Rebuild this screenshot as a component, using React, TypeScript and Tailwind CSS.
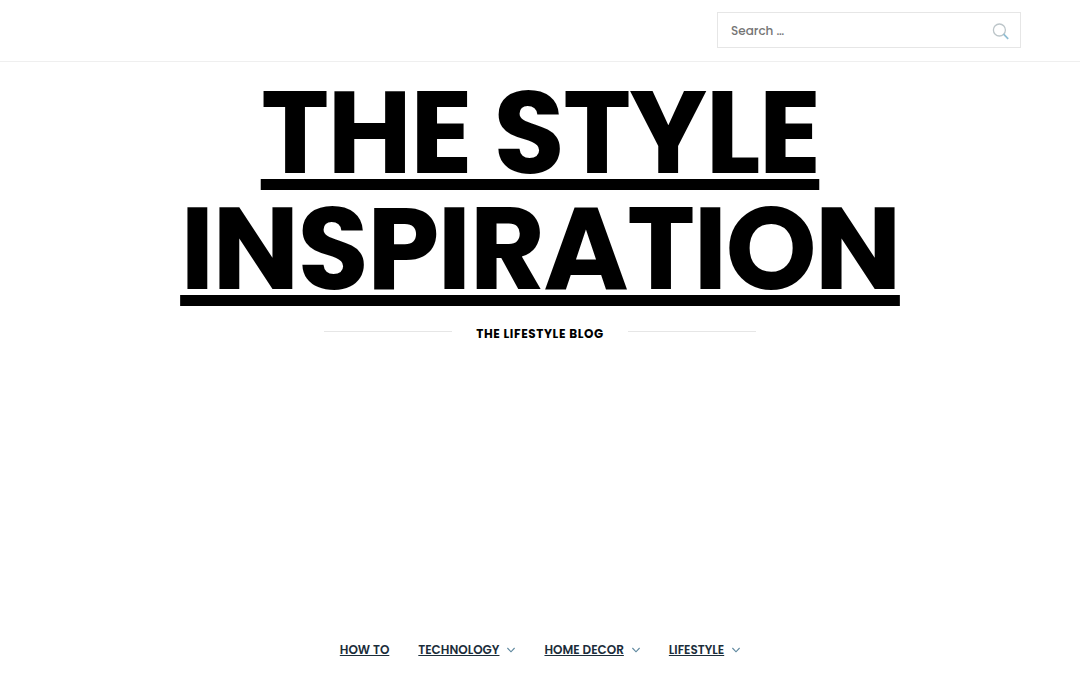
const menuItems = [
  { label: 'How To', hasChildren: false },
  { label: 'Technology', hasChildren: true },
  { label: 'Home Decor', hasChildren: true },
  { label: 'Lifestyle', hasChildren: true },
];

const SearchIcon = () => (
  <svg
    width="17"
    height="17"
    viewBox="0 0 17 17"
    fill="none"
    stroke="#bcc5c9"
    strokeWidth="1.3"
    aria-hidden="true"
  >
    <circle cx="7.4" cy="7" r="6" />
    <path d="M11.6 11.2 16.2 15.8" stroke="#8fbdd3" strokeWidth="1.7" />
  </svg>
);

const ChevronDown = () => (
  <svg
    width="8"
    height="7"
    viewBox="0 0 8 7"
    fill="none"
    stroke="#5d879e"
    strokeWidth="1.1"
    aria-hidden="true"
  >
    <path d="M.4 1 4 4.8 7.6 1" />
  </svg>
);

const App = () => {
  return (
    <div className="min-h-screen bg-white font-['Poppins','Inter',sans-serif] text-black">
      {/* Top bar */}
      <div className="flex justify-end border-b border-[#efefef] pt-3 pr-[59px] pb-[13px]">
        <form
          role="search"
          className="flex h-9 w-[304px] items-center border border-[#e6e6e6] pt-0.5"
          onSubmit={(e) => e.preventDefault()}
        >
          <input
            type="search"
            aria-label="Search"
            placeholder="Search …"
            className="h-full min-w-0 flex-1 bg-transparent px-[13px] text-[12px] font-medium outline-none placeholder:text-[#757575]"
          />
          <button type="submit" aria-label="Search" className="px-[11px]">
            <SearchIcon />
          </button>
        </form>
      </div>

      {/* Site title */}
      <header className="flex flex-col items-center pt-[13px]">
        <h1 className="text-center text-[116px] leading-[116px] font-bold tracking-[-2px]">
          <a
            href="#"
            className="uppercase underline decoration-[11px] underline-offset-[6px] [text-decoration-skip-ink:none]"
          >
            The Style Inspiration
          </a>
        </h1>
        <p className="mt-[17px] flex items-start gap-6 text-[12px] leading-5 font-bold tracking-wider uppercase">
          <span className="mt-[7px] h-px w-32 bg-[#e6e6e6]" />
          The Lifestyle Blog
          <span className="mt-[7px] h-px w-32 bg-[#e6e6e6]" />
        </p>
      </header>

      {/* Main menu */}
      <nav className="mt-[296px]">
        <ul className="flex justify-center gap-[29px] text-[12px] leading-5 font-semibold text-[#1b2d3a]">
          {menuItems.map((item) => (
            <li key={item.label} className="flex items-center gap-2">
              <a href="#" className="uppercase underline underline-offset-1">
                {item.label}
              </a>
              {item.hasChildren && <ChevronDown />}
            </li>
          ))}
        </ul>
      </nav>
    </div>
  );
};

export default App;
